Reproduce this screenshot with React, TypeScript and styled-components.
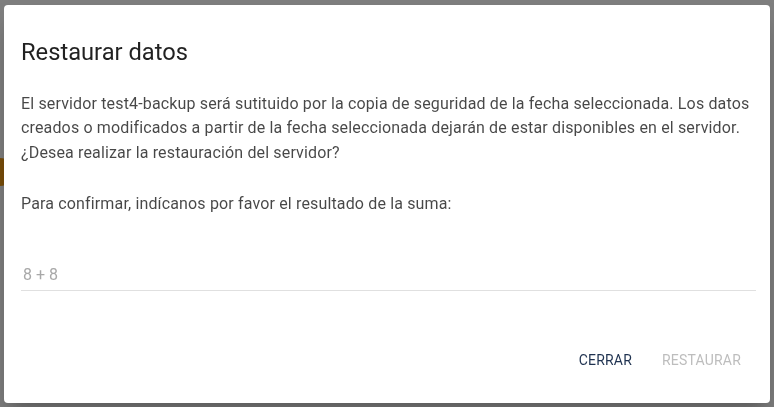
import React, { useState } from "react";
import styled, { createGlobalStyle } from "styled-components";

const GlobalStyle = createGlobalStyle`
  html, body {
    margin: 0;
    padding: 0;
    height: 100%;
    font-family: Roboto, "Liberation Sans", Arial, sans-serif;
  }
  #root {
    height: 100%;
  }
`;

// page that sits under the modal
const Page = styled.div`
  position: relative;
  width: 100%;
  height: 100vh;
  background: #ffffff;
  overflow: hidden;
`;

const PageList = styled.div`
  display: flex;
  flex-direction: column;
  gap: 12px;
  padding: 158px 0 0 0;
  margin-left: -14px;
`;

const Avatar = styled.div`
  width: 28px;
  height: 28px;
  border-radius: 50%;
  background: #f39c12;
`;

const Backdrop = styled.div`
  position: fixed;
  inset: 0;
  background: rgba(0, 0, 0, 0.5);
  display: flex;
  align-items: center;
  justify-content: center;
`;

const Dialog = styled.div`
  width: 766px;
  height: 398px;
  box-sizing: border-box;
  background: #ffffff;
  border-radius: 4px;
  box-shadow: 0 11px 15px -7px rgba(0, 0, 0, 0.2), 0 24px 38px 3px rgba(0, 0, 0, 0.14);
  display: flex;
  flex-direction: column;
  padding: 31px 14px 0 17px;
`;

const Title = styled.h2`
  margin: 0;
  font-size: 23.7px;
  font-weight: 400;
  line-height: 32px;
  color: rgba(0, 0, 0, 0.87);
`;

const Content = styled.div`
  margin-top: 24px;
  flex: 1;
  display: flex;
  flex-direction: column;
`;

const Text = styled.p`
  margin: 0 0 27px 0;
  font-size: 16px;
  letter-spacing: 0.15px;
  line-height: 24.5px;
  color: rgba(0, 0, 0, 0.72);
`;

const Field = styled.input`
  margin-top: 18px;
  width: 100%;
  box-sizing: border-box;
  border: none;
  border-bottom: 1px solid #e0e0e0;
  outline: none;
  padding: 0 0 2px 2px;
  height: 29px;
  font-family: inherit;
  font-size: 16px;
  color: rgba(0, 0, 0, 0.87);
  background: transparent;

  &::placeholder {
    color: #a8a8a8;
  }
`;

const Actions = styled.div`
  margin-top: auto;
  display: flex;
  justify-content: flex-end;
  gap: 8px;
  padding: 0 4px 29px 0;
`;

const Button = styled.button<{ $muted?: boolean }>`
  border: none;
  background: transparent;
  padding: 6px 11px;
  font-family: inherit;
  font-size: 14px;
  font-weight: 400;
  letter-spacing: 0.2px;
  text-transform: uppercase;
  color: ${(p) => (p.$muted ? "#bdbdbd" : "#1f3250")};
  cursor: ${(p) => (p.$muted ? "default" : "pointer")};
`;

export default function App() {
  const [sum, setSum] = useState("");

  return (
    <>
      <GlobalStyle />
      <Page>
        <PageList>
          <Avatar />
        </PageList>
      </Page>
      <Backdrop>
        <Dialog>
          <Title>Restaurar datos</Title>
          <Content>
            <Text>
              El servidor test4-backup será sutituido por la copia de seguridad de la fecha
              seleccionada. Los datos creados o modificados a partir de la fecha seleccionada
              dejarán de estar disponibles en el servidor. ¿Desea realizar la restauración del
              servidor?
            </Text>
            <Text>Para confirmar, indícanos por favor el resultado de la suma:</Text>
            <Field placeholder="8 + 8" value={sum} onChange={(e) => setSum(e.target.value)} />
          </Content>
          <Actions>
            <Button>Cerrar</Button>
            <Button $muted disabled={sum !== "16"}>
              Restaurar
            </Button>
          </Actions>
        </Dialog>
      </Backdrop>
    </>
  );
}
